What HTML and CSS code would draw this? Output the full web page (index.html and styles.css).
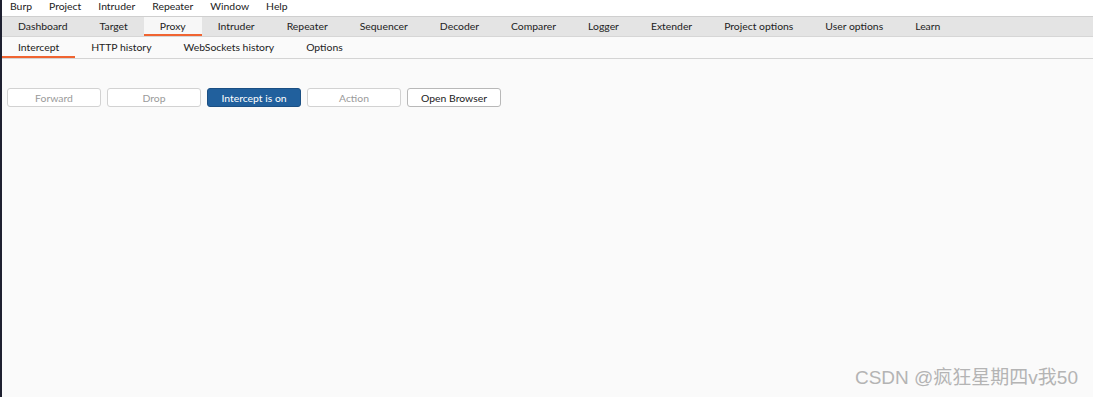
FILE: index.html
```html
<!DOCTYPE html>
<html lang="en">
<head>
  <meta charset="UTF-8" />
  <title>Burp Suite - Proxy</title>
  <link rel="stylesheet" href="styles.css">
</head>
<body>
  <div class="window">
    <div class="menubar">
      <span>Burp</span>
      <span>Project</span>
      <span>Intruder</span>
      <span>Repeater</span>
      <span>Window</span>
      <span>Help</span>
    </div>

    <div class="tabs">
      <div class="tab">Dashboard</div>
      <div class="tab">Target</div>
      <div class="tab active">Proxy</div>
      <div class="tab">Intruder</div>
      <div class="tab">Repeater</div>
      <div class="tab">Sequencer</div>
      <div class="tab">Decoder</div>
      <div class="tab">Comparer</div>
      <div class="tab">Logger</div>
      <div class="tab">Extender</div>
      <div class="tab">Project options</div>
      <div class="tab">User options</div>
      <div class="tab">Learn</div>
    </div>

    <div class="subtabs">
      <div class="subtab active">Intercept</div>
      <div class="subtab">HTTP history</div>
      <div class="subtab">WebSockets history</div>
      <div class="subtab">Options</div>
    </div>

    <div class="content">
      <div class="toolbar">
        <button class="btn" disabled>Forward</button>
        <button class="btn" disabled>Drop</button>
        <button class="btn primary">Intercept is on</button>
        <button class="btn" disabled>Action</button>
        <button class="btn">Open Browser</button>
      </div>
    </div>

    <div class="watermark">CSDN @疯狂星期四v我50</div>
  </div>
</body>
</html>
```

FILE: styles.css
```css
* {
  box-sizing: border-box;
}

html, body {
  margin: 0;
  height: 100%;
}

body {
  font-family: Lato, 'Noto Sans', sans-serif;
  font-size: 10.4px;
  color: #222;
  background: #1e2030;
}

.window {
  position: relative;
  margin-left: 2px;
  height: 100%;
  background: #fafafa;
  display: flex;
  flex-direction: column;
}

.menubar {
  height: 16px;
  background: #ffffff;
  display: flex;
  align-items: flex-start;
  padding-left: 8px;
  line-height: 13px;
}

.menubar span {
  margin-right: 17px;
}

.tabs {
  height: 21px;
  background: #e4e4e4;
  border-top: 1px solid #cfcfcf;
  border-bottom: 1px solid #d6d6d6;
  display: flex;
}

.tab {
  padding: 0 16px 2px;
  display: flex;
  align-items: center;
  position: relative;
}

.tab.active {
  background: #f7f7f7;
}

.tab.active::after,
.subtab.active::after {
  content: "";
  position: absolute;
  left: 0;
  right: 0;
  bottom: 0;
  height: 2px;
  background: #f06431;
}

.subtabs {
  height: 22px;
  background: #fafafa;
  border-bottom: 1px solid #d4d4d4;
  display: flex;
}

.subtab {
  padding: 0 16px 2px;
  display: flex;
  align-items: center;
  position: relative;
}

.content {
  flex: 1;
  padding: 29px 5px 0;
}

.toolbar {
  display: flex;
  gap: 6px;
}

.btn {
  width: 94px;
  height: 19px;
  padding: 0;
  font-family: inherit;
  font-size: 10.4px;
  color: #222;
  background: #ffffff;
  border: 1px solid #b8b8b8;
  border-radius: 3px;
}

.btn:disabled {
  color: #9a9a9a;
  border-color: #d2d2d2;
}

.btn.primary {
  background: #21609d;
  border-color: #1b4f83;
  color: #ffffff;
}

.watermark {
  position: absolute;
  right: 15px;
  bottom: 8px;
  font-family: 'Liberation Sans', 'Noto Sans CJK SC', sans-serif;
  font-size: 19px;
  color: #b4b4b4;
}
```
